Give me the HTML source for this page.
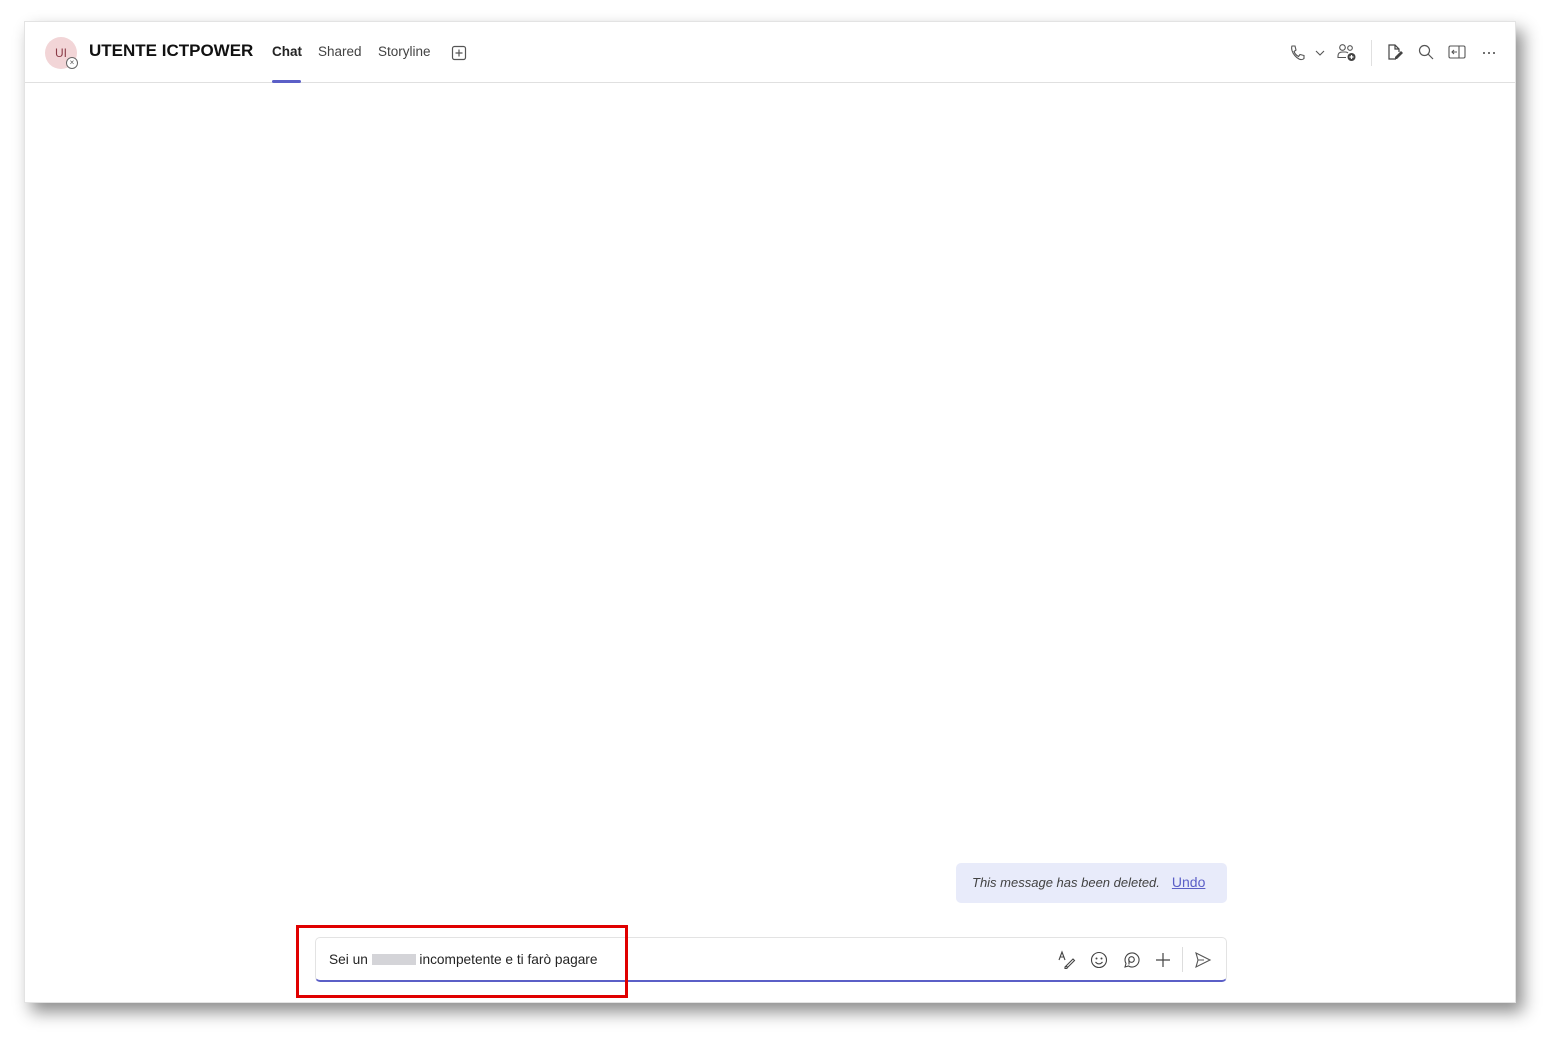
<!DOCTYPE html>
<html><head><meta charset="utf-8"><style>
*{margin:0;padding:0;box-sizing:border-box}
body{width:1558px;height:1045px;background:#fff;position:relative;overflow:hidden;font-family:"Segoe UI","Liberation Sans",sans-serif;color:#242424}
.win{position:absolute;left:24px;top:21px;width:1492px;height:982px;background:#fff;border:1px solid #e3e3e3;box-shadow:7px 9px 16px rgba(0,0,0,.45)}
.hdr{position:absolute;left:0;top:0;width:100%;height:61px;border-bottom:1px solid #e0e0e0}
.av{position:absolute;left:20px;top:15px;width:32px;height:32px;border-radius:50%;background:#f2d5d7;color:#8a3a46;font-size:12px;text-align:center;line-height:32px}
.st{position:absolute;left:41px;top:35px;width:12px;height:12px;border-radius:50%;background:#fff;border:1px solid #666;font-size:8px;line-height:10px;text-align:center;color:#555}
.name{position:absolute;left:64px;top:19px;font-size:17px;font-weight:bold;color:#111}
.tab{position:absolute;top:22px;font-size:13.5px;color:#424242}
.ul{position:absolute;left:247px;top:58px;width:29px;height:3px;background:#5b5fc7;border-radius:2px}
.ic{position:absolute}
.del{position:absolute;left:931px;top:841px;width:271px;height:40px;background:#e8ebfa;border-radius:5px;font-size:13px;font-style:italic;color:#424242;padding:11px 0 0 16px}
.del a{font-style:normal;color:#5b5fc7;text-decoration:underline;margin-left:12px;font-size:14px}
.cmp{position:absolute;left:290px;top:915px;width:912px;height:45px;border:1px solid #e3e3e3;border-bottom:2px solid #5b5fc7;border-radius:5px;font-size:13.7px;padding:14px 0 0 13px}
.blur{display:inline-block;width:44px;height:11px;background:#d4d4d8;vertical-align:-1px}
.red{position:absolute;left:296px;top:925px;width:332px;height:73px;border:3px solid #e00000}
.dot{position:absolute;top:30px;width:2.4px;height:2.4px;border-radius:50%;background:#444}
</style></head><body>
<div class="win">
 <div class="hdr">
  <div class="av">UI</div><div class="st">×</div>
  <div class="name">UTENTE ICTPOWER</div>
  <div class="tab" style="left:247px;font-weight:bold;color:#242424">Chat</div>
  <div class="tab" style="left:293px">Shared</div>
  <div class="tab" style="left:353px">Storyline</div>
  <svg class="ic" style="left:426px;top:23px" width="16" height="16" viewBox="0 0 16 16"><rect x="1.5" y="1.5" width="13" height="13" rx="2" fill="none" stroke="#555" stroke-width="1.2"/><path d="M8 4.5v7M4.5 8h7" stroke="#555" stroke-width="1.2"/></svg>
  <div class="ul"></div>
  <svg class="ic" style="left:1264px;top:22px" width="16" height="18" viewBox="0 0 16 18"><path d="M3 2l3 0 1 4-2 1.5c1 2.5 2.5 4 4.5 5L11 10.5l4 1v3c-1 1-3 1.5-5 .5-3-1.5-6-5-7-8.5C2.5 4.5 2.5 3 3 2z" fill="none" stroke="#555" stroke-width="1.1"/></svg>
  <svg class="ic" style="left:1290px;top:27px" width="10" height="8" viewBox="0 0 10 8"><path d="M1 2l4 4 4-4" fill="none" stroke="#555" stroke-width="1.1"/></svg>
  <svg class="ic" style="left:1312px;top:21px" width="20" height="20" viewBox="0 0 20 20"><circle cx="5.5" cy="4.5" r="2.8" fill="none" stroke="#555" stroke-width="1.1"/><circle cx="13" cy="5" r="2.3" fill="none" stroke="#555" stroke-width="1.1"/><path d="M1 13c0-3 2-4 4.5-4h3c1 0 2 .5 2.5 1M1 13v1.5h8" fill="none" stroke="#555" stroke-width="1.1"/><circle cx="14.5" cy="14" r="4" fill="#444"/><path d="M14.5 12v4M12.5 14h4" stroke="#fff" stroke-width="1.2"/></svg>
  <div style="position:absolute;left:1346px;top:18px;width:1px;height:26px;background:#e0e0e0"></div>
  <svg class="ic" style="left:1361px;top:21px" width="18" height="18" viewBox="0 0 18 18"><path d="M10 16H3V2h6l4 4v3M9 2v4h4" fill="none" stroke="#444" stroke-width="1.2"/><path d="M9 14l6-6 2 2-6 6H9z" fill="#444"/></svg>
  <svg class="ic" style="left:1393px;top:22px" width="16" height="16" viewBox="0 0 16 16"><circle cx="6.5" cy="6.5" r="5" fill="none" stroke="#555" stroke-width="1.2"/><path d="M10 10l5 5" stroke="#555" stroke-width="1.2"/></svg>
  <svg class="ic" style="left:1423px;top:23px" width="18" height="14" viewBox="0 0 18 14"><rect x="1" y="1" width="16" height="12" rx="1.5" fill="none" stroke="#555" stroke-width="1.1"/><path d="M11 1v12M9 7H4m2-2L4 7l2 2" fill="none" stroke="#555" stroke-width="1.1"/></svg>
  <div class="dot" style="left:1458px"></div><div class="dot" style="left:1463px"></div><div class="dot" style="left:1468px"></div>
 </div>
 <div class="del">This message has been deleted.<a>Undo</a></div>
 <div class="cmp">Sei un <span class="blur"></span> incompetente e ti farò pagare
  <svg class="ic" style="left:741px;top:12px" width="20" height="20" viewBox="0 0 20 20"><path d="M2 10l3-8 3 8M3.2 7h3.6" fill="none" stroke="#444" stroke-width="1.1"/><path d="M8 17l8-8 1.5 1.5-8 8H8zM8 17c2-1 3 0 2 1.5" fill="none" stroke="#444" stroke-width="1.1"/></svg>
  <svg class="ic" style="left:774px;top:13px" width="18" height="18" viewBox="0 0 18 18"><circle cx="9" cy="9" r="7.5" fill="none" stroke="#444" stroke-width="1.1"/><circle cx="6.5" cy="7.5" r="1" fill="#444"/><circle cx="11.5" cy="7.5" r="1" fill="#444"/><path d="M5.5 11c2 2.5 5 2.5 7 0" fill="none" stroke="#444" stroke-width="1.1"/></svg>
  <svg class="ic" style="left:806px;top:13px" width="18" height="18" viewBox="0 0 18 18"><path d="M3 16l1-3.5A7 7 0 1 1 6.5 15z" fill="none" stroke="#444" stroke-width="1.1"/><circle cx="9.5" cy="8.5" r="2.8" fill="none" stroke="#444" stroke-width="1.1"/><path d="M7 8.5v5" stroke="#444" stroke-width="1.1"/></svg>
  <svg class="ic" style="left:838px;top:13px" width="18" height="18" viewBox="0 0 18 18"><path d="M9 2v14M2 9h14" stroke="#444" stroke-width="1.2"/></svg>
  <div style="position:absolute;left:866px;top:9px;width:1px;height:25px;background:#ddd"></div>
  <svg class="ic" style="left:878px;top:13px" width="18" height="18" viewBox="0 0 18 18"><path d="M2 2l14 7-14 7 2-7zM4 9h6" fill="none" stroke="#555" stroke-width="1.1"/></svg>
 </div>
</div>
<div class="red"></div>
</body></html>
